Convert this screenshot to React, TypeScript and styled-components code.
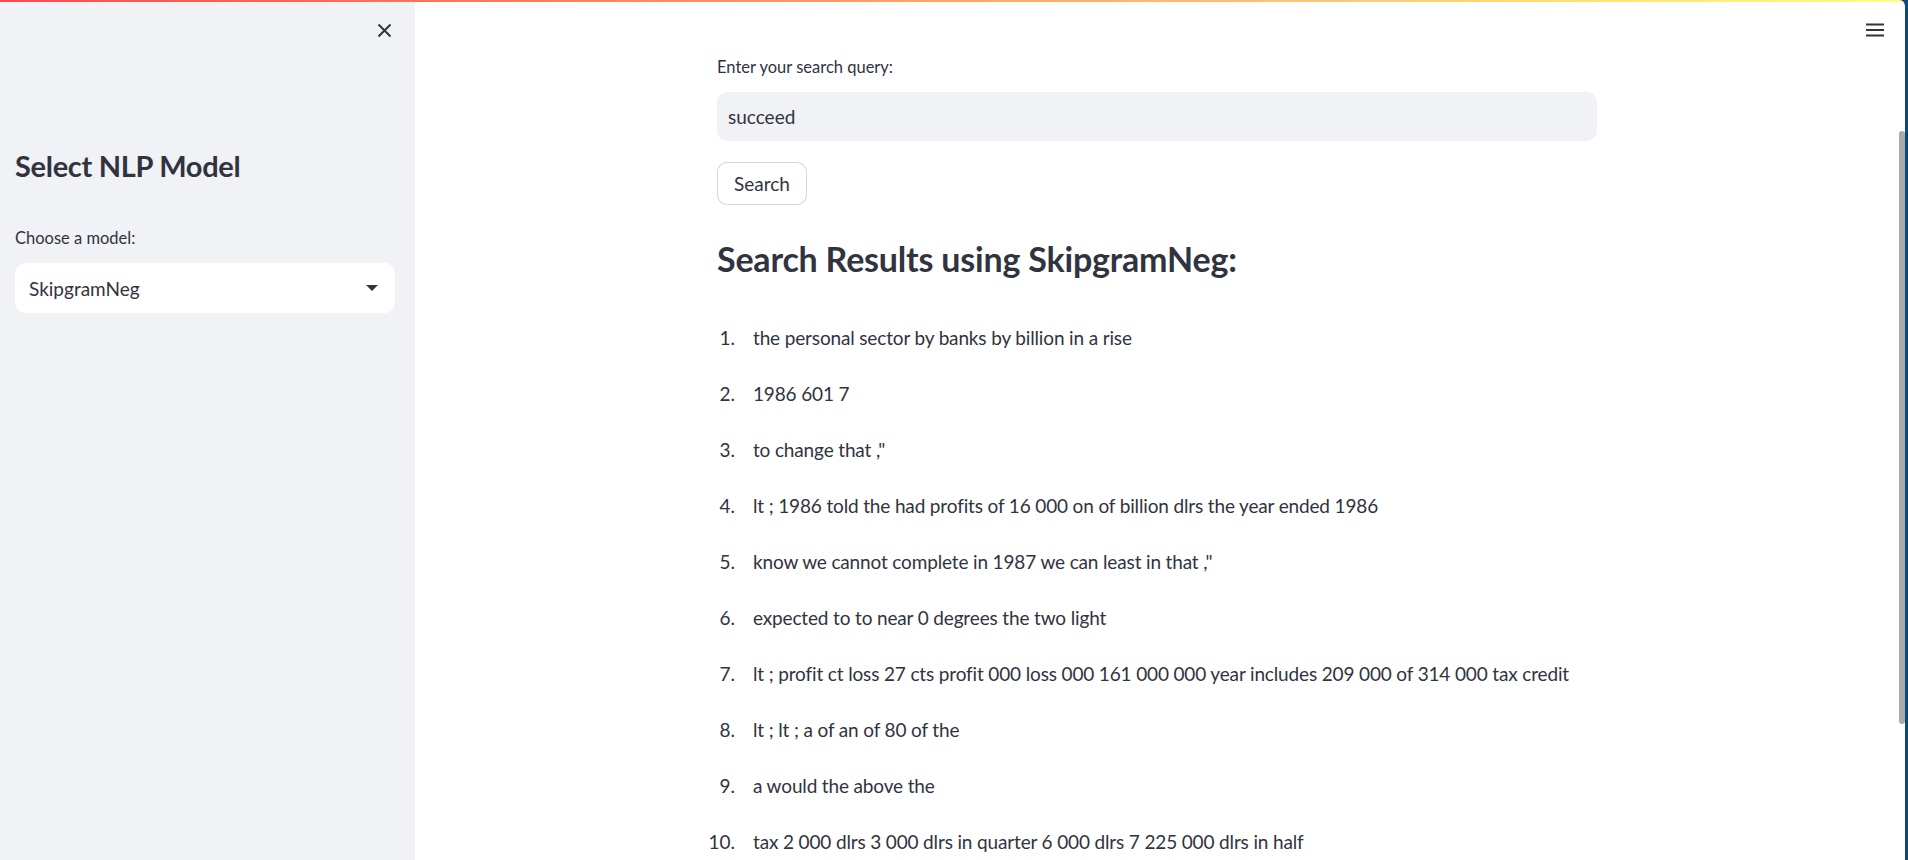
import React from "react";
import styled, { createGlobalStyle } from "styled-components";

const GlobalStyle = createGlobalStyle`
  html, body {
    margin: 0;
    padding: 0;
    background: #0d4a7c;
    overflow: hidden;
  }
  * { box-sizing: border-box; }
  body {
    font-family: Lato, "Noto Sans", sans-serif;
    color: #31333f;
  }
`;

const Window = styled.div`
  width: 1905px;
  height: 860px;
  background: #ffffff;
  border-top-right-radius: 6px;
  display: flex;
  flex-direction: column;
  overflow: hidden;
`;

const Decoration = styled.div`
  height: 2px;
  flex: 0 0 2px;
  background: linear-gradient(90deg, #ff4b4b, #fffd80);
`;

const Body = styled.div`
  flex: 1;
  display: flex;
  min-height: 0;
`;

const Sidebar = styled.aside`
  width: 415px;
  flex: 0 0 415px;
  background: #f0f2f6;
  padding: 0 20px 0 15px;
  display: flex;
  flex-direction: column;
`;

const SidebarTop = styled.div`
  height: 56px;
  display: flex;
  justify-content: flex-end;
  align-items: center;
`;

const IconButton = styled.button`
  border: none;
  background: transparent;
  padding: 0;
  width: 20px;
  height: 20px;
  display: flex;
  align-items: center;
  justify-content: center;
  color: #31333f;
  cursor: pointer;
  margin-right: 1px;
`;

const SidebarHeading = styled.h2`
  margin: 88px 0 0 0;
  font-family: Lato, sans-serif;
  font-weight: 700;
  font-size: 29px;
  line-height: 40px;
  color: #31333f;
  letter-spacing: -0.3px;
`;

const Label = styled.label`
  display: block;
  font-size: 16.5px;
  line-height: 22px;
  color: #31333f;
`;

const SidebarLabel = styled(Label)`
  margin-top: 41px;
`;

const SelectBox = styled.div`
  margin-top: 14px;
  height: 50px;
  background: #ffffff;
  border-radius: 10px;
  display: flex;
  align-items: center;
  justify-content: space-between;
  padding: 0 17px 0 14px;
  font-size: 19px;
  color: #31333f;
`;

const Caret = styled.span`
  width: 0;
  height: 0;
  border-left: 6px solid transparent;
  border-right: 6px solid transparent;
  border-top: 6px solid #31333f;
`;

const Main = styled.main`
  flex: 1;
  display: flex;
  min-width: 0;
`;

const Content = styled.div`
  flex: 1;
  display: flex;
  justify-content: center;
  position: relative;
`;

const Column = styled.div`
  width: 880px;
  padding-top: 54px;
  display: flex;
  flex-direction: column;
  align-items: flex-start;
`;

const MenuButton = styled.button`
  position: absolute;
  top: 18px;
  right: 14px;
  border: none;
  background: transparent;
  padding: 0;
  width: 20px;
  height: 20px;
  display: flex;
  align-items: center;
  justify-content: center;
  color: #31333f;
`;

const TextInput = styled.div`
  margin-top: 14px;
  width: 100%;
  height: 49px;
  background: #f0f2f6;
  border-radius: 10px;
  display: flex;
  align-items: center;
  padding-left: 11px;
  font-size: 19px;
  color: #31333f;
`;

const Button = styled.button`
  margin-top: 21px;
  height: 43px;
  padding: 0 16px;
  background: #ffffff;
  border: 1px solid rgba(49, 51, 63, 0.2);
  border-radius: 10px;
  font-family: Lato, sans-serif;
  font-size: 19px;
  color: #31333f;
`;

const ResultsHeading = styled.h3`
  margin: 32px 0 0 0;
  font-family: Lato, sans-serif;
  font-weight: 700;
  font-size: 34px;
  line-height: 44px;
  color: #31333f;
  letter-spacing: -0.2px;
`;

const List = styled.ol`
  list-style: none;
  margin: 42px 0 0 0;
  padding: 0;
  display: flex;
  flex-direction: column;
  gap: 26px;
`;

const Item = styled.li`
  display: flex;
  font-size: 19px;
  line-height: 30px;
  white-space: nowrap;
`;

const Num = styled.span`
  flex: 0 0 18px;
  width: 18px;
  min-width: 0;
  margin-right: 18px;
  display: flex;
  justify-content: flex-end;
  white-space: nowrap;
`;

const ItemText = styled.span`
  letter-spacing: -0.15px;
`;

const ScrollTrack = styled.div`
  width: 6px;
  flex: 0 0 6px;
  padding-top: 129px;
`;

const Thumb = styled.div`
  height: 593px;
  background: #a9a9ae;
  border-radius: 3px;
`;

const results = [
  "the personal sector by banks by billion in a rise",
  "1986 601 7",
  'to change that ,"',
  "lt ; 1986 told the had profits of 16 000 on of billion dlrs the year ended 1986",
  'know we cannot complete in 1987 we can least in that ,"',
  "expected to to near 0 degrees the two light",
  "lt ; profit ct loss 27 cts profit 000 loss 000 161 000 000 year includes 209 000 of 314 000 tax credit",
  "lt ; lt ; a of an of 80 of the",
  "a would the above the",
  "tax 2 000 dlrs 3 000 dlrs in quarter 6 000 dlrs 7 225 000 dlrs in half",
];

export default function App() {
  return (
    <>
      <GlobalStyle />
      <Window>
        <Decoration />
        <Body>
          <Sidebar>
            <SidebarTop>
              <IconButton aria-label="Close sidebar">
                <svg width="15" height="15" viewBox="0 0 15 15">
                  <path d="M1.5 1.5 L13.5 13.5 M13.5 1.5 L1.5 13.5" stroke="#31333f" strokeWidth="2" />
                </svg>
              </IconButton>
            </SidebarTop>
            <SidebarHeading>Select NLP Model</SidebarHeading>
            <SidebarLabel>Choose a model:</SidebarLabel>
            <SelectBox>
              <span>SkipgramNeg</span>
              <Caret />
            </SelectBox>
          </Sidebar>
          <Main>
            <Content>
              <Column>
                <Label>Enter your search query:</Label>
                <TextInput>succeed</TextInput>
                <Button>Search</Button>
                <ResultsHeading>Search Results using SkipgramNeg:</ResultsHeading>
                <List>
                  {results.map((r, i) => (
                    <Item key={i}>
                      <Num>{i + 1}.</Num>
                      <ItemText>{r}</ItemText>
                    </Item>
                  ))}
                </List>
              </Column>
              <MenuButton aria-label="Main menu">
                <svg width="20" height="14" viewBox="0 0 20 14">
                  <path d="M1 1.5 H19 M1 7 H19 M1 12.5 H19" stroke="#31333f" strokeWidth="2" />
                </svg>
              </MenuButton>
            </Content>
            <ScrollTrack>
              <Thumb />
            </ScrollTrack>
          </Main>
        </Body>
      </Window>
    </>
  );
}
